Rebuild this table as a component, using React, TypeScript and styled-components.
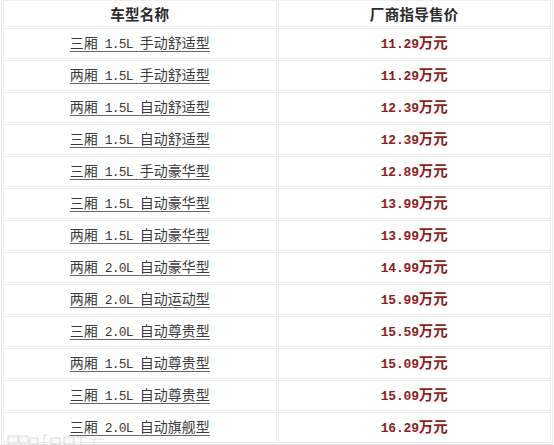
import React from 'react';
import styled, { createGlobalStyle } from 'styled-components';

const Global = createGlobalStyle`
  html, body { margin: 0; padding: 0; background: #fff; }
  body { width: 554px; height: 445px; overflow: hidden; }
`;

const Page = styled.div`
  position: relative;
  padding: 0 1px;
  width: 552px;
`;

const Table = styled.div`
  display: grid;
  grid-template-columns: 1fr 1fr;
  grid-template-rows: 27px;
  grid-auto-rows: 31px;
  gap: 1px;
  border: 1px solid #e8e8e8;
  border-top: none;
  padding: 0 1px 1px 1px;
`;

const Cell = styled.div<{ $head?: boolean }>`
  border: 1px solid #efefef;
  display: flex;
  align-items: center;
  justify-content: center;
  height: ${(p) => (p.$head ? '27px' : '31px')};
  box-sizing: border-box;
  white-space: nowrap;
  font-family: 'Noto Sans CJK SC', sans-serif;
  font-size: 14px;
`;

const HeadText = styled.span`
  font-family: 'Noto Sans CJK SC', sans-serif;
  font-weight: 700;
  font-size: 14.5px;
  color: #2a2a2a;
  letter-spacing: 0.3px;
`;

const Name = styled.span`
  color: #3c3c3c;
  text-decoration: underline;
  text-decoration-color: #666;
  text-underline-offset: 3px;
  font-size: 14px;
  line-height: 16px;
`;

const Price = styled.span`
  color: #8e1c22;
  font-weight: 700;
  font-size: 14.5px;
  line-height: 16px;
`;

const Latin = styled.span<{ $bold?: boolean }>`
  font-family: 'Liberation Mono', monospace;
  font-size: 13px;
  letter-spacing: ${(p) => (p.$bold ? '-0.2px' : '-0.8px')};
  font-weight: ${(p) => (p.$bold ? 700 : 400)};
`;

const Mark = styled.svg`
  position: absolute;
  left: 6px;
  top: 434px;
`;

function Mixed({ text, bold }: { text: string; bold?: boolean }) {
  const parts = text.split(/([\x20-\x7e]+)/).filter((s) => s.length > 0);
  return (
    <>
      {parts.map((p, i) =>
        /^[\x20-\x7e]+$/.test(p) ? (
          <Latin key={i} $bold={bold}>
            {p}
          </Latin>
        ) : (
          <React.Fragment key={i}>{p}</React.Fragment>
        )
      )}
    </>
  );
}

const rows: [string, string][] = [
  ['三厢 1.5L 手动舒适型', '11.29'],
  ['两厢 1.5L 手动舒适型', '11.29'],
  ['两厢 1.5L 自动舒适型', '12.39'],
  ['三厢 1.5L 自动舒适型', '12.39'],
  ['三厢 1.5L 手动豪华型', '12.89'],
  ['三厢 1.5L 自动豪华型', '13.99'],
  ['两厢 1.5L 自动豪华型', '13.99'],
  ['两厢 2.0L 自动豪华型', '14.99'],
  ['两厢 2.0L 自动运动型', '15.99'],
  ['三厢 2.0L 自动尊贵型', '15.59'],
  ['两厢 1.5L 自动尊贵型', '15.09'],
  ['三厢 1.5L 自动尊贵型', '15.09'],
  ['三厢 2.0L 自动旗舰型', '16.29'],
];

export default function App() {
  return (
    <Page>
      <Global />
      <Table>
        <Cell $head>
          <HeadText>车型名称</HeadText>
        </Cell>
        <Cell $head>
          <HeadText>厂商指导售价</HeadText>
        </Cell>
        {rows.map(([name, price], i) => (
          <React.Fragment key={i}>
            <Cell>
              <Name>
                <Mixed text={name} />
              </Name>
            </Cell>
            <Cell>
              <Price>
                <Mixed text={price} bold />
                万元
              </Price>
            </Cell>
          </React.Fragment>
        ))}
      </Table>
      <Mark width="100" height="11" viewBox="0 0 100 11">
        <g fill="#fafafa" stroke="#d2d2d2" strokeWidth="0.8">
          <rect x="2" y="2" width="10" height="7" />
          <rect x="13" y="2" width="9" height="7" />
          <rect x="24" y="4" width="8" height="6" />
          <path d="M38 10 V1 H41" />
          <rect x="45" y="4" width="9" height="6" />
          <rect x="58" y="3" width="10" height="7" />
          <path d="M70 3 H80 M75 3 V10" />
          <path d="M84 5 H98 M88 5 V10" />
        </g>
      </Mark>
    </Page>
  );
}
